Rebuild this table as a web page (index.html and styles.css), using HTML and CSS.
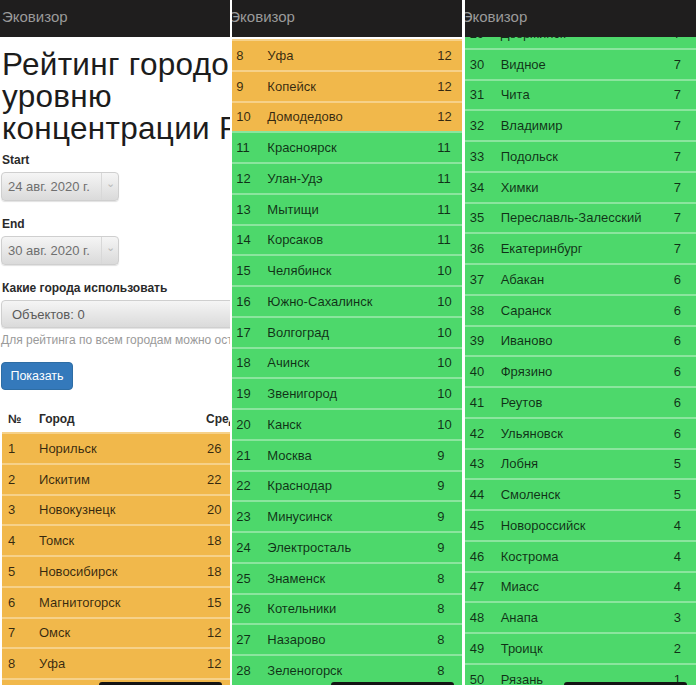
FILE: index.html
```html
<!DOCTYPE html>
<html lang="ru">
<head>
<meta charset="utf-8">
<title>Эковизор — рейтинг городов</title>
<link rel="stylesheet" href="styles.css">
</head>
<body>
<div class="collage">
  <section class="phone p1">
    <header class="navbar"><span class="brand">Эковизор</span></header>
    <main class="page">
      <h1 class="title">Рейтинг городов по<br>уровню<br>концентрации PM2.5</h1>
      <div class="group">
        <label class="lbl">Start</label>
        <div class="select date"><span class="val">24 авг. 2020 г.</span><span class="arrow">&#8964;</span></div>
      </div>
      <div class="group">
        <label class="lbl">End</label>
        <div class="select date"><span class="val">30 авг. 2020 г.</span><span class="arrow">&#8964;</span></div>
      </div>
      <div class="group tight">
        <label class="lbl">Какие города использовать</label>
        <div class="select multi"><span class="val">Объектов: 0</span></div>
        <p class="help">Для рейтинга по всем городам можно оставить поле пустым</p>
      </div>
      <button class="btn">Показать</button>
      <div class="table">
        <div class="thead"><span>№</span><span>Город</span><span>Среднее</span></div>
        <div class="row warn"><span>1</span><span>Норильск</span><span>26</span></div>
        <div class="row warn"><span>2</span><span>Искитим</span><span>22</span></div>
        <div class="row warn"><span>3</span><span>Новокузнецк</span><span>20</span></div>
        <div class="row warn"><span>4</span><span>Томск</span><span>18</span></div>
        <div class="row warn"><span>5</span><span>Новосибирск</span><span>18</span></div>
        <div class="row warn"><span>6</span><span>Магнитогорск</span><span>15</span></div>
        <div class="row warn"><span>7</span><span>Омск</span><span>12</span></div>
        <div class="row warn"><span>8</span><span>Уфа</span><span>12</span></div>
        <div class="row warn"><span>9</span><span>Копейск</span><span>12</span></div>
      </div>
    </main>
    <div class="homebar"></div>
  </section>

  <section class="phone p2">
    <header class="navbar"><span class="brand">Эковизор</span></header>
    <div class="scroll">
      <div class="list">
        <div class="row warn"><span>8</span><span>Уфа</span><span>12</span></div>
        <div class="row warn"><span>9</span><span>Копейск</span><span>12</span></div>
        <div class="row warn"><span>10</span><span>Домодедово</span><span>12</span></div>
        <div class="row ok"><span>11</span><span>Красноярск</span><span>11</span></div>
        <div class="row ok"><span>12</span><span>Улан-Удэ</span><span>11</span></div>
        <div class="row ok"><span>13</span><span>Мытищи</span><span>11</span></div>
        <div class="row ok"><span>14</span><span>Корсаков</span><span>11</span></div>
        <div class="row ok"><span>15</span><span>Челябинск</span><span>10</span></div>
        <div class="row ok"><span>16</span><span>Южно-Сахалинск</span><span>10</span></div>
        <div class="row ok"><span>17</span><span>Волгоград</span><span>10</span></div>
        <div class="row ok"><span>18</span><span>Ачинск</span><span>10</span></div>
        <div class="row ok"><span>19</span><span>Звенигород</span><span>10</span></div>
        <div class="row ok"><span>20</span><span>Канск</span><span>10</span></div>
        <div class="row ok"><span>21</span><span>Москва</span><span>9</span></div>
        <div class="row ok"><span>22</span><span>Краснодар</span><span>9</span></div>
        <div class="row ok"><span>23</span><span>Минусинск</span><span>9</span></div>
        <div class="row ok"><span>24</span><span>Электросталь</span><span>9</span></div>
        <div class="row ok"><span>25</span><span>Знаменск</span><span>8</span></div>
        <div class="row ok"><span>26</span><span>Котельники</span><span>8</span></div>
        <div class="row ok"><span>27</span><span>Назарово</span><span>8</span></div>
        <div class="row ok"><span>28</span><span>Зеленогорск</span><span>8</span></div>
        <div class="row ok"><span>29</span><span>Дзержинск</span><span>7</span></div>
      </div>
    </div>
    <div class="homebar"></div>
  </section>

  <section class="phone p3">
    <header class="navbar"><span class="brand">Эковизор</span></header>
    <div class="scroll">
      <div class="list">
        <div class="row ok"><span>29</span><span>Дзержинск</span><span>7</span></div>
        <div class="row ok"><span>30</span><span>Видное</span><span>7</span></div>
        <div class="row ok"><span>31</span><span>Чита</span><span>7</span></div>
        <div class="row ok"><span>32</span><span>Владимир</span><span>7</span></div>
        <div class="row ok"><span>33</span><span>Подольск</span><span>7</span></div>
        <div class="row ok"><span>34</span><span>Химки</span><span>7</span></div>
        <div class="row ok"><span>35</span><span>Переславль-Залесский</span><span>7</span></div>
        <div class="row ok"><span>36</span><span>Екатеринбург</span><span>7</span></div>
        <div class="row ok"><span>37</span><span>Абакан</span><span>6</span></div>
        <div class="row ok"><span>38</span><span>Саранск</span><span>6</span></div>
        <div class="row ok"><span>39</span><span>Иваново</span><span>6</span></div>
        <div class="row ok"><span>40</span><span>Фрязино</span><span>6</span></div>
        <div class="row ok"><span>41</span><span>Реутов</span><span>6</span></div>
        <div class="row ok"><span>42</span><span>Ульяновск</span><span>6</span></div>
        <div class="row ok"><span>43</span><span>Лобня</span><span>5</span></div>
        <div class="row ok"><span>44</span><span>Смоленск</span><span>5</span></div>
        <div class="row ok"><span>45</span><span>Новороссийск</span><span>4</span></div>
        <div class="row ok"><span>46</span><span>Кострома</span><span>4</span></div>
        <div class="row ok"><span>47</span><span>Миасс</span><span>4</span></div>
        <div class="row ok"><span>48</span><span>Анапа</span><span>3</span></div>
        <div class="row ok"><span>49</span><span>Троицк</span><span>2</span></div>
        <div class="row ok"><span>50</span><span>Рязань</span><span>1</span></div>
      </div>
    </div>
    <div class="homebar"></div>
  </section>
</div>
</body>
</html>
```
FILE: styles.css
```css
html, body {
  margin: 0;
  padding: 0;
  background: #ffffff;
}

body {
  font-family: "Liberation Sans", Arial, sans-serif;
  color: #333333;
}

.collage {
  display: flex;
  gap: 2px;
  width: 696px;
  height: 685px;
  overflow: hidden;
}

.phone {
  position: relative;
  height: 685px;
  overflow: hidden;
  background: #ffffff;
  display: flex;
  flex-direction: column;
}

.p1 { width: 231px; }
.p2 { width: 230px; margin-right: 1px; }
.p3 { width: 232px; }

.navbar {
  flex: none;
  height: 37px;
  background: #1f1e1e;
  display: flex;
  align-items: center;
}

.brand {
  font-size: 15px;
  color: #9a9a9a;
  padding-left: 2px;
  padding-bottom: 4px;
  white-space: nowrap;
}

.p2 .brand,
.p3 .brand {
  margin-left: -5px;
}

/* ---------- page 1 ---------- */
.page {
  padding-left: 1px;
  width: 360px;
}

.title {
  margin: 11px 0 9px 1px;
  font-size: 31.5px;
  line-height: 32px;
  font-weight: normal;
  color: #1c1c1c;
  white-space: nowrap;
  letter-spacing: 0.3px;
}

.group {
  margin-bottom: 16px;
}

.lbl {
  display: block;
  font-size: 12px;
  line-height: 15px;
  font-weight: bold;
  color: #2a2a2a;
  margin: 0 0 4px 1px;
}

.select {
  box-sizing: border-box;
  display: flex;
  align-items: center;
  border: 1px solid #cfcfcf;
  border-radius: 4px;
  background: linear-gradient(#f5f5f5, #dadada);
  box-shadow: 0 1px 1px rgba(0, 0, 0, 0.12);
  color: #6f6f6f;
  font-size: 13px;
}

.select.date {
  width: 118px;
  height: 29px;
}

.select.date .val {
  flex: 1;
  padding-left: 6px;
}

.arrow {
  width: 17px;
  height: 100%;
  border-left: 1px solid #d8d8d8;
  color: #b9b9b9;
  font-size: 11px;
  display: flex;
  align-items: center;
  justify-content: center;
  padding-bottom: 6px;
  box-sizing: border-box;
}

.select.multi {
  width: 340px;
  height: 28px;
  color: #5a5a5a;
}

.select.multi .val {
  padding-left: 10px;
}

.help {
  margin: 5px 0 0 0;
  font-size: 12px;
  line-height: 15px;
  color: #9a9a9a;
  white-space: nowrap;
}

.group.tight {
  margin-bottom: 14px;
}

.btn {
  display: block;
  width: 72px;
  height: 28px;
  padding: 0;
  border: 1px solid #2e6da4;
  border-radius: 4px;
  background: #3479bb;
  color: #ffffff;
  font-family: "Liberation Sans", Arial, sans-serif;
  font-size: 12.5px;
}

.table {
  margin-top: 22px;
  margin-left: 1px;
  width: 340px;
}

.thead {
  display: grid;
  grid-template-columns: 31px 167px auto;
  padding-left: 6px;
  height: 15px;
  font-size: 12px;
  line-height: 15px;
  font-weight: bold;
  color: #2a2a2a;
  margin-bottom: 5px;
}

/* ---------- rows ---------- */
.row {
  box-sizing: border-box;
  display: grid;
  grid-template-columns: 31px 168px auto;
  align-items: center;
  height: 30.75px;
  padding-left: 6px;
  border-top: 2px solid rgba(255, 255, 255, 0.35);
  font-size: 13px;
  color: rgba(0, 0, 0, 0.78);
  white-space: nowrap;
}

.row.warn { background: #f1b84b; }
.row.ok { background: #4dd86b; }

.p2 .row { grid-template-columns: 31px 170px auto; padding-left: 4px; }
.p3 .row { grid-template-columns: 31px 173px auto; padding-left: 5px; }

.scroll {
  flex: 1;
  overflow: hidden;
}

.p2 .list { margin-top: 2px; }
.p3 .list { margin-top: -20px; }

.homebar {
  position: absolute;
  left: 99px;
  bottom: -1px;
  width: 123px;
  height: 4px;
  background: #141414;
  border-radius: 3px 3px 0 0;
}
```
